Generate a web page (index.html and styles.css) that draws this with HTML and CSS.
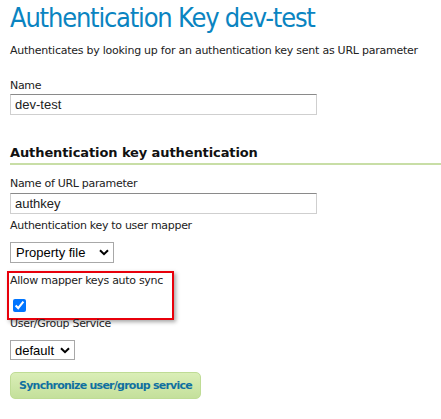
FILE: index.html
```html
<!DOCTYPE html>
<html>
<head>
<meta charset="utf-8">
<link rel="stylesheet" href="styles.css">
</head>
<body>
<div class="page">
  <h1 class="title">Authentication Key dev-test</h1>
  <p class="desc">Authenticates by looking up for an authentication key sent as URL parameter</p>

  <div class="field field-name">
    <label class="label">Name</label>
    <input class="text" type="text" value="dev-test">
  </div>

  <h2 class="section">Authentication key authentication</h2>

  <div class="field field-param">
    <label class="label">Name of URL parameter</label>
    <input class="text" type="text" value="authkey">
  </div>

  <div class="field field-mapper">
    <label class="label">Authentication key to user mapper</label>
    <span class="select-wrap sel-mapper">
      <select class="select"><option>Property file</option></select>
      <svg class="chev" width="10" height="7" viewBox="0 0 10 7"><path d="M1 1.2 L5 5.2 L9 1.2" fill="none" stroke="#000" stroke-width="2"/></svg>
    </span>
  </div>

  <div class="field field-sync">
    <div class="highlight"></div>
    <label class="label">Allow mapper keys auto sync</label>
    <input class="check" type="checkbox" checked>
  </div>

  <div class="field field-service">
    <label class="label">User/Group Service</label>
    <span class="select-wrap sel-service">
      <select class="select"><option>default</option></select>
      <svg class="chev" width="10" height="7" viewBox="0 0 10 7"><path d="M1 1.2 L5 5.2 L9 1.2" fill="none" stroke="#000" stroke-width="2"/></svg>
    </span>
  </div>

  <button class="btn" type="button">Synchronize user/group service</button>
</div>
</body>
</html>
```
FILE: styles.css
```css
html, body {
  margin: 0;
  padding: 0;
  background: #fff;
}
.page {
  padding: 0 0 0 10px;
  font-family: "DejaVu Sans", Verdana, sans-serif;
  font-size: 11px;
  color: #222;
}
.title {
  margin: 0;
  padding-top: 2px;
  font-family: "DejaVu Sans Condensed", "DejaVu Sans", Verdana, sans-serif;
  font-stretch: condensed;
  font-weight: normal;
  font-size: 27px;
  line-height: 32px;
  color: #0a84c1;
  letter-spacing: -1.2px;
  white-space: nowrap;
}
.desc {
  margin: 10px 0 0 0;
  font-size: 11px;
  line-height: 14px;
  color: #222;
  letter-spacing: -0.25px;
  white-space: nowrap;
}
.field {
  display: flex;
  flex-direction: column;
  align-items: flex-start;
  position: relative;
}
.label {
  font-size: 11px;
  line-height: 14px;
  color: #222;
  letter-spacing: -0.3px;
}
.field-name { margin-top: 21px; }
.text {
  box-sizing: border-box;
  width: 307px;
  height: 21px;
  margin: 1px 0 0 0;
  padding: 0 4px;
  border: 1px solid #cfcfcf;
  border-top-color: #8a8a8a;
  font-family: "Liberation Sans", Arial, sans-serif;
  font-size: 13px;
  color: #222;
  outline: none;
}
.section {
  margin: 29px 0 0 0;
  padding-bottom: 1px;
  font-size: 13px;
  line-height: 18px;
  font-weight: bold;
  color: #111;
  border-bottom: 2px solid #c8dea6;
  letter-spacing: -0.1px;
}
.field-param { margin-top: 12px; }
.field-param .text { margin-top: 2px; }
.field-mapper { margin-top: 5px; }
.select-wrap {
  position: relative;
  display: inline-block;
}
.select {
  -webkit-appearance: none;
  appearance: none;
  box-sizing: border-box;
  height: 21px;
  border: 1px solid #a8a8a8;
  border-radius: 0;
  background: #fff;
  font-family: "Liberation Sans", Arial, sans-serif;
  font-size: 13px;
  color: #000;
  padding: 0 0 0 5px;
  outline: none;
}
.sel-mapper { margin-top: 9px; }
.sel-mapper .select { width: 104px; }
.sel-service .select { width: 65px; height: 20px; padding-left: 4px; }
.chev {
  position: absolute;
  right: 5px;
  top: 7px;
  pointer-events: none;
}
.field-sync { margin-top: 11px; }
.highlight {
  position: absolute;
  left: -3px;
  top: -3px;
  width: 163px;
  height: 45px;
  border: 2px solid #e8000b;
  box-shadow: 2px 2px 4px rgba(0,0,0,0.35);
  pointer-events: none;
}
.check {
  width: 13px;
  height: 13px;
  margin: 11px 0 0 3px;
  accent-color: #0075ff;
}
.field-service { margin-top: 5px; }
.sel-service { margin-top: 9px; }
.btn {
  margin-top: 12px;
  box-sizing: border-box;
  width: 191px;
  height: 27px;
  border: 1px solid #bfdc95;
  border-radius: 5px;
  background: linear-gradient(#daeeb7, #c4e09b);
  font-family: "DejaVu Sans", Verdana, sans-serif;
  font-size: 11px;
  font-weight: bold;
  color: #1070a0;
  letter-spacing: -0.75px;
  padding: 0;
}
```
